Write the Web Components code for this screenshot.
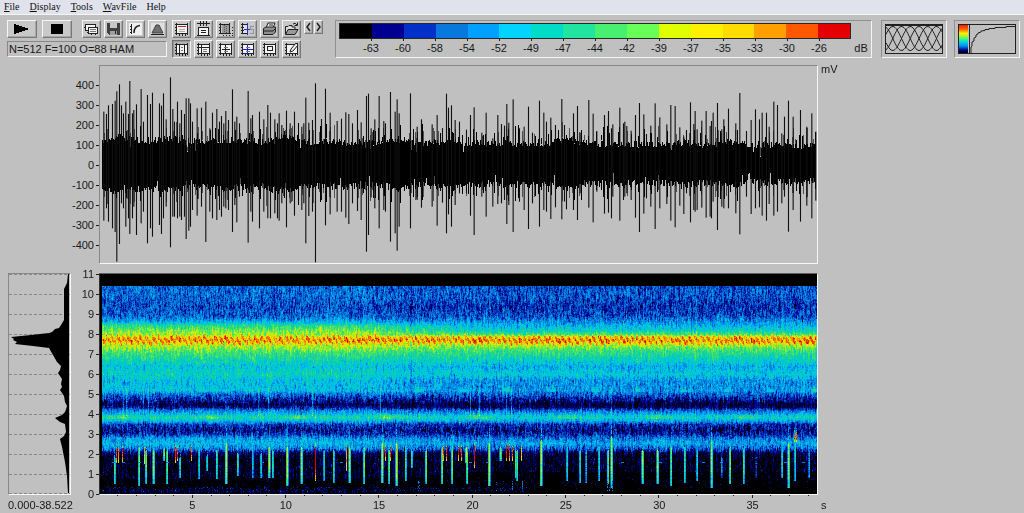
<!DOCTYPE html>
<html lang="en">
<head>
<meta charset="utf-8">
<title>Spectrogram</title>
<style>
  html, body { margin: 0; background: #c0c0c0; }
  body { min-height: 100vh; font: 11px/14px "Liberation Sans", Arial, sans-serif; color: #181818; }
</style>
</head>
<body>
<sound-app></sound-app>
<script>
const PALETTE = ['#000000', '#000090', '#0030c8', '#0878dc', '#00a0ff', '#00d4ff', '#00dcc8', '#20e4a0',
  '#48f070', '#68ff58', '#e0ff00', '#fff000', '#ffdc00', '#ffa000', '#ff5800', '#e40000'];
const RGB = PALETTE.map(c => [1, 3, 5].map(i => parseInt(c.slice(i, i + 2), 16)));
const DURATION = 38.522;

function randomSource(seed) {
  return () => {
    seed = (seed + 0x6D2B79F5) | 0;
    let t = Math.imul(seed ^ (seed >>> 15), 1 | seed);
    t = (t + Math.imul(t ^ (t >>> 7), 61 | t)) ^ t;
    return ((t ^ (t >>> 14)) >>> 0) / 4294967296;
  };
}

function define(name, html, setup) {
  const template = document.createElement('template');
  template.innerHTML = html;
  customElements.define(name, class extends HTMLElement {
    constructor() {
      super();
      this.attachShadow({ mode: 'open' }).append(template.content.cloneNode(true));
    }
    connectedCallback() { if (setup) setup(this, this.shadowRoot); }
  });
}

/* Menu bar */
define('menu-bar', `
<style>
  :host { display: block; background: #e0e2ec; border-bottom: 1px solid #f4f4f4; }
  nav { display: flex; gap: 10px; padding: 0 4px; }
  button { all: unset; font: 10px/14px "Liberation Serif", "Times New Roman", serif; color: #101010; }
  u { text-decoration-thickness: 1px; text-underline-offset: 1px; }
</style>
<nav>
  <button><u>F</u>ile</button><button><u>D</u>isplay</button><button><u>T</u>ools</button><button><u>W</u>avFile</button><button>Help</button>
</nav>`);

/* Raised button with an icon drawn on a 19 by 18 grid */
define('tool-button', `
<style>
  :host { display: block; width: 19px; height: 18px; }
  :host([wide]) { width: 30px; }
  :host([small]) { width: 9px; height: 14px; }
  button { display: flex; align-items: center; justify-content: center; box-sizing: border-box; width: 100%; height: 100%;
    margin: 0; padding: 0; background: #c8c8c8; border: 1px solid; border-color: #f6f6f6 #787878 #787878 #f6f6f6;
    box-shadow: inset -1px -1px #a8a8a8; }
  :host([pressed]) button { background: #b4b4b4; border-color: #707070 #eee #eee #707070; box-shadow: inset 1px 1px #989898; }
</style>
<button><slot></slot></button>`, (host, root) => {
  root.querySelector('button').setAttribute('aria-label', host.getAttribute('name'));
});

define('info-box', `
<style>
  :host { display: flex; align-items: center; box-sizing: border-box; height: 16px; padding-left: 1px; border: 1px solid;
    border-color: #888 #f4f4f4 #f4f4f4 #888; }
</style><slot></slot>`);

/* Colour scale */
define('db-scale', `
<style>
  :host { display: flex; box-sizing: border-box; height: 38px; padding: 2px 0 0 3px; border: 1px solid; border-color: #909090 #f4f4f4 #f4f4f4 #909090; }
  .scale { flex: 1; }
  .cells { display: flex; box-sizing: border-box; height: 16px; border: 1px solid #282828; }
  .cells i { flex: 1; }
  .labels { display: grid; grid-template-columns: repeat(15, 1fr); margin: 0 3.125%; }
  .labels span { text-align: center; }
  .labels span::before { content: ""; display: block; width: 1px; height: 2px; margin: 0 auto; background: #202020; }
  .unit { width: 20px; text-align: center; padding-top: 18px; }
</style>
<div class="scale"><div class="cells"></div><div class="labels"></div></div><div class="unit">dB</div>`, (host, root) => {
  root.querySelector('.cells').innerHTML = PALETTE.map(c => `<i style="background:${c}"></i>`).join('');
  root.querySelector('.labels').innerHTML = [63, 60, 58, 54, 52, 49, 47, 44, 42, 39, 37, 35, 33, 30, 26].map(v => `<span>-${v}</span>`).join('');
});

const PREVIEW = `:host { display: flex; box-sizing: border-box; width: 66px; height: 38px; padding: 2px; border: 1px solid; border-color: #909090 #f4f4f4 #f4f4f4 #909090; }`;

define('window-preview', `<style>${PREVIEW}</style>
<svg width="60" height="32" viewBox="0 0 60 32" fill="none" stroke="#202020">
<rect x="1.5" y="1.5" width="57" height="29"/><path d="M1 2.5H59"/><g id="arches"></g></svg>`, (host, root) => {
  let d = '';
  for (let k = 0; k < 4; k++) {
    for (let x = 2; x <= 58; x++) {
      const y = 15.5 - 12 * Math.cos(2 * Math.PI * (x / 35 + k / 4));
      d += (x === 2 ? 'M' : 'L') + x + ' ' + y.toFixed(2);
    }
  }
  root.querySelector('#arches').innerHTML = `<path d="${d}"/>`;
});

define('curve-preview', `<style>${PREVIEW}</style>
<svg width="60" height="32" viewBox="0 0 60 32" fill="none" stroke="#202020">
<defs><linearGradient id="g" x2="0" y2="1"><stop offset="0" stop-color="#f02000"/><stop offset=".15" stop-color="#ff6000"/><stop offset=".3" stop-color="#fff000"/><stop offset=".45" stop-color="#70f850"/><stop offset=".6" stop-color="#00d8e0"/><stop offset=".75" stop-color="#0090f0"/><stop offset=".9" stop-color="#000090"/><stop offset="1" stop-color="#000"/></linearGradient></defs>
<rect x="1.5" y="1.5" width="57" height="29"/><rect x="2" y="2" width="9" height="28" fill="url(#g)" stroke="none"/><path d="M12.5 2V30"/>
<path d="M14 30V24L15 23V19L17 18V15L19 14V12L21 11V10L24 9V8L28 7.5V6.5H32V5.5H38V4.5H49V3.5H58"/></svg>`);

/* Toolbar */
const FRAME = '<path d="M3.5 2V14M2 3.5H15M14.5 2V14M2 12.5H15" stroke="#202020"/><path d="M2 6.5H4M2 9.500H4M6.5 13V15M9.5 13V15M12.5 13V15" stroke="#202020"/>';
const icon = (body, w = 17, h = 16) => `<svg width="${w}" height="${h}" viewBox="0 0 ${w} ${h}" fill="none" stroke="#202020" shape-rendering="crispEdges">${body}</svg>`;
const paper = body => icon('<path d="M4 4H14V12H4Z" fill="#f4f4f4" stroke="none"/>' + FRAME + body);
const btn = (name, svg, attrs = '') => `<tool-button name="${name}" ${attrs}>${svg}</tool-button>`;

define('tool-bar', `
<style>
  :host { display: grid; grid-template-columns: 160px 151px 1fr 139px; padding: 5px 4px 0 7px; }
  .left, .right { display: flex; flex-direction: column; gap: 2px; }
  .row { display: flex; gap: 3px; }
  .left .row { gap: 5px; }
  .icons { display: flex; gap: 3px; margin-left: auto; }
  .right { margin-left: 5px; }
  .pair { display: flex; gap: 1px; }
  info-box { margin-top: 1px; }
  db-scale { margin-left: 17px; margin-right: 9px; }
  .previews { display: flex; gap: 7px; }
</style>
<div class="left">
  <div class="row">
    ${btn('Play', icon('<path d="M6 3L22 8L6 13Z" fill="#000" stroke="none"/>', 28), 'wide')}
    ${btn('Stop', icon('<path d="M8 3H20V13H8Z" fill="#000" stroke="none"/>', 28), 'wide')}
    <div class="icons">
      ${btn('Cascade', icon('<path d="M2.5 3.5H12.5V9.5H2.5Z" fill="#f4f4f4"/><path d="M1 6.5H3"/><path d="M5.5 6.5H14.5V12.5H5.5Z" fill="#f4f4f4"/><path d="M7 8.5H13M7 10.5H13" stroke="#777"/><path d="M3.5 11.5H6M8.5 13V14M12.5 13V14"/>'))}
      ${btn('Save', icon('<path d="M2 2H15V14H4L2 12Z" fill="#404040" stroke="none"/><path d="M5 2H12V7H5Z" fill="#c8c8c8" stroke="none"/><path d="M5 10H12V14H5Z" fill="#a0a0a0" stroke="none"/><path d="M10.5 10V13"/>'))}
      ${btn('Transfer curve', icon('<path d="M2 2H15V14H2Z" fill="#f0f0f0" stroke="none"/><path d="M4.5 3V13M3 11.5H5M3 8.5H5M3 5.5H5"/><path d="M7 12Q7 5 13 4.5" stroke-width="1.5" shape-rendering="auto"/>'))}
      ${btn('Window', icon('<path d="M2 2H15V13H2Z" fill="#e0e0e0" stroke="none"/><path d="M3 12L7 4H10L14 12Z" fill="#707070" stroke="#404040" shape-rendering="auto"/><path d="M2 13.5H15"/>'))}
    </div>
  </div>
  <info-box>N=512 F=100 O=88 HAM</info-box>
</div>
<div class="right">
  <div class="row">
    ${btn('Title', paper('<path d="M5 5.5H13" stroke="#d02020"/><path d="M6 8.5H12M6 10.5H12" stroke="#aaa"/>'))}
    ${btn('Time axis', icon('<path d="M4 7H14V14H4Z" fill="#f4f4f4" stroke="none"/><path d="M3.5 6V15M13.5 6V15M2 14.5H15M3 6.5H14M6 9.5H11M6 11.5H11M2 2.5H15M5.5 0V5M8.5 0V5M11.5 0V5"/>'))}
    ${btn('Shading', icon('<path d="M5 4H12V12H5Z" fill="#999" stroke="none"/><path d="M3.5 2V13M2 3.5H13M12.5 2V12M2 12.5H14M2 6.5H4M2 9.5H4"/><path d="M7.5 4V12M9.5 5V12" stroke="#555" stroke-dasharray="1 1"/><path d="M6 14.5H16M15.500 6V14" stroke-dasharray="1 2"/>'))}
    ${btn('Spectrum cursor', icon('<path d="M4 4H9V12H4Z" fill="#e0e0e0" stroke="none"/><path d="M3.5 2V13M2 3.5H8M2 12.5H8M2 6.5H5M2 9.5H5"/><path d="M8.5 2V14M5 8.5H11" stroke="#3030c0"/><path d="M14.5 5.5H11.5V8.5H14.5V12.5H11" stroke="#9090b0"/>'))}
    ${btn('Print', icon('<g shape-rendering="auto"><path d="M5 7L7 2H14L12 7Z" fill="#f0f0f0"/><path d="M2.5 7.5L5 6H14.5V11L12 13.5H2.5Z" fill="#909090"/><path d="M3 10H12L14 8M8 4H12"/></g>'))}
    ${btn('Open', icon('<g shape-rendering="auto"><path d="M2.5 13V5.5H5L6 4.5H9V6H12V8" fill="#ddd"/><path d="M2.5 13.5L5 8.5H15L12 13.5Z" fill="#999"/><path d="M10 3Q12 1 14 4M14.5 1.5V4.5H11.5"/></g>'))}
    <div class="pair">
      ${btn('Previous', icon('<path d="M5 2L2 6L5 10" stroke-width="1.5" shape-rendering="auto"/>', 7, 12), 'small')}
      ${btn('Next', icon('<path d="M2 2L5 6L2 10" stroke-width="1.5" shape-rendering="auto"/>', 7, 12), 'small')}
    </div>
  </div>
  <div class="row">
    ${btn('Time cursors', paper('<path d="M6.5 4V12M11.5 4V12"/><path d="M8 6.5H10M8 9.5H10" stroke="#777"/>'), 'pressed')}
    ${btn('Frequency cursors', paper('<path d="M6.5 4V12M4 6.5H14"/><path d="M8 8.5H12M8 10.5H12" stroke="#777"/>'))}
    ${btn('Crosshair', paper('<path d="M8.5 4V12M5 8.5H13"/><path d="M7 6.5H11M7 10.5H11" stroke="#777"/>'))}
    ${btn('Blue crosshair', paper('<path d="M8.5 3V14M3 8.5H14" stroke="#2020c0"/><path d="M7 6.5H11M7 10.5H11" stroke="#777"/>'))}
    ${btn('Box', paper('<path d="M6.5 5.5H11.5V9.5H6.5Z"/>'))}
    ${btn('Draw', paper('<path d="M7 11L8 8L13 2L15 4L10 10Z" fill="#eee" shape-rendering="auto"/>'))}
  </div>
</div>
<db-scale></db-scale>
<div class="previews"><window-preview></window-preview><curve-preview></curve-preview></div>`);

/* Value axis: labels in equal 20px steps with a tick each */
define('value-axis', `
<style>
  :host { display: block; }
  div { display: flex; align-items: center; justify-content: flex-end; gap: 2px; height: 20px; }
  div::after { content: ""; width: 3px; height: 1px; background: #202020; }
</style>`, (host, root) => {
  const from = +host.getAttribute('from'), step = +host.getAttribute('step'), count = +host.getAttribute('count');
  for (let i = 0; i < count; i++) {
    const row = document.createElement('div');
    row.textContent = from - i * step;
    root.append(row);
  }
});

/* Waveform: each entry is time position, top and bottom, in thirds of a pixel */
const SPIKES = [
  [60, '131,155,482 139,162,445 145,136,485 157,132,505 165,122,516 170,94,605 178,73,552 184,136,430 190,160,445 197,125,500 205,162,475 209,63,522 217,160,475 221,150,440 229,133,525 243,87,490 250,185,455 262,105,550 271,132,505 277,98,530 298,130,495 304,137,522 310,100,475 318,178,440 331,52,562 338,147,470 343,185,470 352,125,475 359,190,470 364,150,480 373,162,470 378,115,537 386,115,512 391,130,500 397,185,450 411,145,467 424,143,440 437,125,546 449,205,455 457,158,475 470,147,480 478,185,450 484,168,470 491,190,440 497,153,445 505,180,450 517,88,516 524,185,435 530,170,487 538,190,410 564,93,548 572,175,455 577,165,485 598,155,505 611,178,455 623,135,475 631,158,475 644,178,460 652,190,475 657,160,482 665,195,430 679,152,502 690,190,430 703,155,467'],
  [300, '5,200,450 11,190,430 17,113,550 26,188,468 46,70,607 37,180,455 64,177,420 76,86,496 90,158,463 111,183,455 124,176,455 137,157,473 146,162,492 157,190,430 172,150,453 183,187,480 199,108,575 205,101,525 213,205,412 224,178,445 237,108,505 251,183,450 256,190,455 271,96,545 285,155,520 291,118,572 297,160,500 331,100,505 351,200,420 364,178,443 396,193,440 411,165,497 427,205,428 439,101,520 445,143,463 454,136,500 465,180,435 478,185,400 499,209,400 511,165,467 522,142,525 545,218,410 558,158,470 578,235,440 593,165,432 604,192,430 613,197,420 620,132,492 626,188,435 639,118,516 658,205,425 672,200,450 685,140,507 697,218,430 718,122,500 731,158,450 739,185,455 752,173,477 766,195,442'],
  [560, '5,117,478 13,195,425 19,235,448 40,160,450 52,138,480 60,218,400 86,120,443 99,161,487 110,213,395 133,165,461 145,153,458 154,205,475 158,193,410 179,143,482 190,190,420 194,185,410 200,198,400 213,212,420 226,165,473 238,129,516 251,163,461 259,222,415 272,197,440 285,130,507 299,172,445 320,193,432 332,135,482 345,138,502 359,202,437 371,230,462 379,210,400 391,127,487 401,192,450 405,153,455 411,208,450 425,182,443 438,153,473 450,198,470 454,183,475 459,158,425 472,129,510 485,208,440 491,178,445 505,146,445 527,190,460 539,99,523 559,213,410 573,180,462 586,148,445 598,178,442 606,158,467 619,158,482 627,200,432 641,125,467 652,135,455 665,220,430 673,170,410 685,122,515 699,170,450 721,150,485 740,200,437 755,160,475 767,215,422']
];
define('wave-plot', `
<style>
  :host { display: block; box-sizing: border-box; height: 199px; border: 1px solid; border-color: #888 #f8f8f8 #f8f8f8 #888; }
  canvas { display: block; width: 100%; height: 197px; }
</style><canvas width="717" height="197"></canvas>`, (host, root) => {
  const g = root.querySelector('canvas').getContext('2d');
  const rnd = randomSource(11);
  const mid = 99;
  for (let x = 2; x < 716; x++) {
    const near = 1 - x / 716;
    let up = 16 + near * 5 + rnd() * 7, down = 13 + near * 7 + rnd() * 7;
    const swell = Math.max(0, Math.sin(x / 9) + Math.sin(x / 23)) * 2;
    up += swell;
    down += swell;
    if (rnd() < .03) up -= 8;
    if (rnd() < .05) down -= 8;
    g.fillStyle = '#000';
    g.fillRect(x, Math.round(mid - up), 1, Math.round(up + down));
    const tip = rnd() < .25 ? 4 + rnd() * 12 : 0;
    g.fillStyle = rnd() < .5 ? '#505050' : '#000';
    g.fillRect(x, Math.round(mid - up - tip), 1, Math.round(tip));
    g.fillRect(x, Math.round(mid + down) - 1, 1, Math.round(tip));
  }
  for (const [start, list] of SPIKES) {
    for (const item of list.split(' ')) {
      const [x, top, bottom] = item.split(',').map(Number);
      g.fillStyle = '#101010';
      g.fillRect(start + x / 3 - 100.4, top / 3 - 6, 1.1, (bottom - top) / 3);
    }
  }
});

/* Mean spectrum, drawn from the right edge */
define('mean-spectrum', `
<style>
  :host { display: block; box-sizing: border-box; width: 63px; height: 222px; border: 1px solid; border-color: #888 #f8f8f8 #f8f8f8 #888; }
  svg { display: block; }
</style>
<svg width="61" height="220" viewBox="0 0 61 220"><g></g>
<path fill="#000" d="M59 0L58 9L55 15V46L52 51L50 54L46 55L43 58L40 59L22 61L2 63L5 65L4 66L8 68L6 70L24 72L40 74L44 81L48 88L50 90L52 92L51 96L49 99L51 102L53 105L52 110L53 113L51 116L55 122L56 128L58 132L56 138L53 141L46 144L51 148L56 150L57 158L55 162L51 165L53 173L56 188L58 202L59 219H60V0Z"/></svg>`, (host, root) => {
  let d = '';
  for (let i = 0; i <= 11; i++) d += `M0 ${Math.min(219, i * 20) + .5}H61`;
  root.querySelector('g').innerHTML = `<path d="${d}" stroke="#888" stroke-dasharray="3 2"/>`;
});

/* Spectrogram. Mean level for each frequency in kHz, as an index into the palette */
const LEVELS = [[11, 0, 0], [10.45, 0, 0], [10.4, 3, 2.5], [9.9, 3, 2.6], [9.4, 2.4, 2], [8.9, 2.9, 2.5], [8.65, 4.4, 3.6], [8.45, 7.2, 4.6], [8.2, 8.8, 5.8],
  [8, 9.8, 8.2], [7.9, 10.6, 10.4], [7.7, 11, 11], [7.5, 10.4, 10.4], [7.35, 9.5, 8.8], [7.1, 8, 7.4], [6.8, 6.8, 6.2], [6.4, 5.2, 4.6], [6, 6.1, 5.4], [5.7, 5, 3.8], [5.2, 5, 3.8],
  [5, 3, 2.8], [4.8, 1.9, 1.6], [4.5, .7, .4], [4.35, 1.3, .8], [4.2, 3.4, 2.8], [4, 5, 4.6], [3.85, 6.5, 6], [3.7, 5.2, 4.6], [3.5, 2.2, 1.9],
  [3.2, 1.3, 1], [3, 2, 1.7], [2.8, 4, 3.2], [2.55, 4.7, 4.3], [2.3, 3.5, 2.8], [2.1, 1, .7], [1.9, .2, .1], [.4, 0, 0], [.1, .1, 0], [0, 0, 0]];
/* Calls below 2 kHz: x, top, bottom in thirds of a pixel, peak level */
const CALLS = [
  [95, '57,560,640,7 65,535,575,14 70,535,575,13 82,535,575,14 133,530,645,8 149,530,580,12 155,540,640,8 175,540,640,9 209,535,570,8 218,540,640,8 240,530,575,14 247,535,570,14 256,560,620,6 289,530,570,14 312,530,625,6 337,555,600,6 364,540,625,7 394,520,640,10 428,550,615,7 473,530,620,5 500,550,620,6 524,530,620,10 532,540,620,7 578,530,645,10 618,530,640,9 660,530,630,15 687,540,630,6 715,540,635,7 754,530,600,12 763,530,635,9'],
  [350, '43,530,640,8 97,520,635,10 105,530,570,14 118,540,640,8 120,530,570,14 139,520,645,11 167,530,630,7 183,540,590,7 230,540,640,8 277,530,640,8 280,530,570,14 288,530,570,14 307,530,640,8 325,530,570,14 333,530,570,14 348,530,575,10 352,545,640,8 372,525,590,15 417,520,645,10 450,530,570,9 470,525,570,15 478,525,570,14 486,530,570,14 497,540,620,7 502,540,630,8 514,530,570,12 574,510,645,10 653,530,630,6 690,540,635,6 708,540,635,4 747,530,630,6'],
  [600, '25,540,640,8 35,500,650,9 127,540,640,9 173,540,640,9 214,530,645,8 253,530,635,7 292,540,630,6 333,510,650,9 364,560,620,3 390,530,640,8 431,540,640,7 470,560,620,2 547,530,620,6 566,520,650,9 587,500,630,6 583,490,512,15 590,490,512,15 629,540,620,4']
];
define('spectrogram-plot', `
<style>
  :host { display: block; box-sizing: border-box; height: 222px; border: 1px solid; border-color: #606060 #f8f8f8 #f8f8f8 #303030; }
  canvas { display: block; width: 100%; height: 220px; }
</style><canvas width="717" height="220"></canvas>`, (host, root) => {
  const W = 717, H = 220, rnd = randomSource(5);
  const level = new Float32Array(W * H);
  const drift = new Float32Array(W);
  const columns = Array.from({ length: W }, () => (rnd() - .5) * .7);
  const strokes = Array.from({ length: W }, () => rnd() - .5);
  const noise = () => rnd() + rnd() + rnd() - 1.5;
  for (let y = 0; y < H; y++) {
    const f = 11 - y / 20;
    let k = 0;
    while (k < LEVELS.length - 2 && LEVELS[k + 1][0] > f) k++;
    const a = LEVELS[k], b = LEVELS[k + 1];
    const t = Math.min(1, Math.max(0, (a[0] - f) / (a[0] - b[0])));
    const early = a[1] + (b[1] - a[1]) * t, late = a[2] + (b[2] - a[2]) * t;
    for (let x = 0; x < W; x++) {
      const blend = Math.min(1, Math.max(0, (x - 250) / 120));
      let v = early + (late - early) * blend;
      drift[x] = drift[x] * .58 + noise() * 1.45;
      if (v > .05) v += drift[x] * (v < 1 ? .6 : 1) + columns[x];
      if (f < 4 && f > 3.75) {
        v += 1.7 * Math.max(0, Math.sin(x / 43 * Math.PI * .96 + .2)) ** 3;
      }
      if (f < 5.4 && f > 5.1 && x > 300) v += Math.max(0, Math.sin(x / 7)) ** 6 * 2 * (f < 5.3 ? 1 : .4);
      if (f < 8.02 && f > 7.4) {
        const phase = x / 5.7 + Math.sin(x / 17) * .3;
        const ridge = 7.9 - .36 * (phase - Math.floor(phase)) + strokes[x] * .12;
        const d = Math.abs(f - ridge);
        v += d < .13 ? 2.6 : d > .3 ? -.8 : 0;
      }
      if (f < 1.9 && f > .3 && rnd() < .04) v += rnd() * 1.7;
      if (f < .35 && f > .15 && x < 430) v += rnd() < .25 ? rnd() * 2 : 0;
      if (x > 309 && x < 312 && f < 10.4 && f > 5) v -= 1.2;
      level[y * W + x] = v;
    }
  }
  for (const [start, list] of CALLS) {
    for (const item of list.split(' ')) {
      const [px, top, bottom, peak] = item.split(',').map(Number);
      const x = Math.round(start + px / 3 - 100.4), y0 = Math.round(top / 3 - 4), y1 = Math.round(bottom / 3 - 4);
      const tail = peak > 11 ? 5 : 22;
      for (let y = y0 - tail; y <= y1; y++) {
        const s = (y - y0) / (y1 - y0);
        let v = s < 0 ? peak * (.65 + s * .6) * (rnd() < .6 ? 1 : .4) : peak * (1.05 - Math.max(0, s - .6) * .7) + noise() * 1.6;
        if (v < 0) continue;
        level[y * W + x] = Math.max(level[y * W + x], v);
        if (peak < 12 && s > 0) {
          const side = x + (peak % 2 ? 1 : -1);
          level[y * W + side] = Math.max(level[y * W + side], v * .65);
          if (peak > 8) level[y * W + x * 2 - side] = Math.max(level[y * W + x * 2 - side], v * .35);
        }
      }
    }
  }
  for (const x of [12, 22, 38, 66, 161, 240, 369, 386, 521, 559, 602, 620, 684, 702]) {
    for (let i = 0; i < 3; i++) level[188 * W + x + i] = 3.4;
  }
  for (const x of [23, 26, 43, 48, 158, 168, 212, 280, 370, 379, 406, 411, 419, 511]) {
    for (let y = 114; y < 142; y++) level[y * W + x] += 2.2 + noise();
  }
  for (const x of [318, 319, 396, 412, 422, 507, 509, 512]) {
    for (let y = 207; y < 217; y++) if (rnd() < .5) level[y * W + x] = 2 + rnd() * 2;
  }
  const g = root.querySelector('canvas').getContext('2d');
  const image = g.createImageData(W, H);
  for (let i = 0; i < W * H; i++) {
    const x = i % W;
    const own = level[i];
    const around = (level[i - (x ? 1 : 0)] + (level[i + 1] ?? 0)) / 2;
    const mix = i > 172 * W ? 0 : .12;
    const v = Math.max(0, Math.min(14.99, own * (1 - mix) + around * mix));
    const n = Math.floor(v), t = v - n;
    for (let c = 0; c < 3; c++) image.data[i * 4 + c] = (RGB[n][c] + (RGB[n + 1][c] - RGB[n][c]) * t) * .93;
    image.data[i * 4 + 3] = 255;
  }
  g.putImageData(image, 0, 0);
  g.fillStyle = '#000';
  g.fillRect(0, 0, 2, H);
});

/* Time axis under the spectrogram */
define('time-axis', `
<style>
  :host { display: block; }
  svg { display: block; width: 100%; height: 3px; }
  div { display: grid; grid-template-columns: 5fr repeat(7, 10fr) 2fr; }
  span { text-align: center; }
  span:first-child { grid-column: 2; }
</style>
<svg stroke="#202020" shape-rendering="crispEdges"></svg><div></div>`, (host, root) => {
  let lines = '';
  for (let s = 1; s < DURATION; s++) {
    const x = (s / DURATION * 100).toFixed(2) + '%';
    lines += `<line x1="${x}" x2="${x}" y1="0" y2="${s % 5 ? 1 : 3}"/>`;
  }
  root.querySelector('svg').innerHTML = lines;
  root.querySelector('div').innerHTML = [5, 10, 15, 20, 25, 30, 35].map(s => `<span>${s}</span>`).join('');
});

define('sound-app', `
<style>
  :host { display: block; }
  main { display: grid; grid-template-columns: 99px 1fr 206px; padding-top: 7px; }
  .wave-axis { padding-top: 10px; }
  .unit { padding-left: 3px; margin-top: -3px; }
  .gap { grid-column: 1 / 4; height: 9px; }
  .left { display: flex; justify-content: space-between; padding-left: 8px; }
  .left value-axis { margin-top: -9px; height: 222px; }
  .range { padding: 3px 0 0 8px; }
  .seconds { padding: 3px 0 0 3px; }
</style>
<menu-bar></menu-bar>
<tool-bar></tool-bar>
<main>
  <value-axis class="wave-axis" from="400" step="100" count="9"></value-axis>
  <wave-plot></wave-plot>
  <div class="unit">mV</div>
  <div class="gap"></div>
  <div class="left"><mean-spectrum></mean-spectrum><value-axis from="11" step="1" count="12"></value-axis></div>
  <spectrogram-plot></spectrogram-plot>
  <div></div>
  <div class="range">0.000-38.522</div>
  <time-axis></time-axis>
  <div class="seconds">s</div>
</main>`);
</script>
</body>
</html>
